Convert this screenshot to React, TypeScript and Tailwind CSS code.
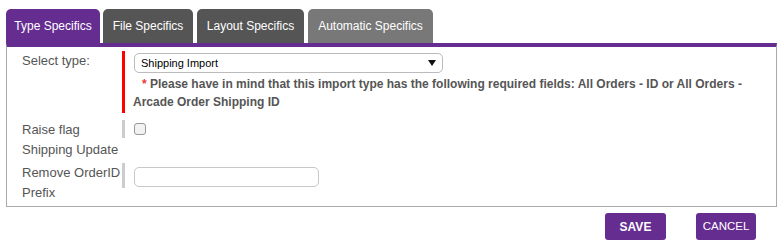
import React from "react";

export default function App() {
  const font = { fontFamily: '"Liberation Sans", Arial, sans-serif' };
  return (
    <div className="w-[780px] h-[250px] bg-white relative overflow-hidden" style={font}>
      <div className="pl-[6px] pt-[9px]">
        {/* Tabs */}
        <div className="flex gap-[3px] h-[34px]">
          <div className="w-[94px] h-[34px] bg-[#662d91] rounded-t-[5px] text-white text-[12px] flex items-center justify-center">
            Type Specifics
          </div>
          <div className="w-[90px] h-[34px] bg-[#555555] rounded-t-[5px] text-white text-[12px] flex items-center justify-center">
            File Specifics
          </div>
          <div className="w-[107px] ml-[1px] h-[34px] bg-[#555555] rounded-t-[5px] text-white text-[12px] flex items-center justify-center">
            Layout Specifics
          </div>
          <div className="w-[125px] ml-[1px] h-[34px] bg-[#787878] rounded-t-[5px] text-white text-[12px] flex items-center justify-center">
            Automatic Specifics
          </div>
        </div>
        {/* Content box */}
        <div className="w-[771px] border-t-[4px] border-t-[#662d91] border-x border-b border-x-[#aaaaaa] border-b-[#aaaaaa] pt-[4px] pb-[3px]">
          {/* Row 1 */}
          <div className="flex">
            <div className="w-[115px] pl-[15px] text-[13px] leading-[20px] text-[#555] shrink-0 whitespace-nowrap">Select type:</div>
            <div className="border-l-[3px] border-l-[#ff0000] pl-[9px] pt-[2px] h-[62px]">
              <div className="w-[309px] h-[20px] border border-[#bbbbbb] rounded-[5px] flex items-center justify-between pl-[6px] pr-[6px] text-[11px] text-black">
                <span>Shipping Import</span>
                <svg width="8" height="6" viewBox="0 0 8 6"><path d="M0 0 H8 L4 6 Z" fill="#111" /></svg>
              </div>
              <div className="w-[612px] -ml-[1px] text-[12px] font-bold leading-[18px] text-[#555] mt-[2px] indent-[9px]">
                <span className="text-[#e83a3a]">*</span> Please have in mind that this import type has the following required fields: All Orders - ID or All Orders - Arcade Order Shipping ID
              </div>
            </div>
          </div>
          {/* Row 2 */}
          <div className="flex mt-[7px]">
            <div className="w-[115px] pl-[15px] text-[13px] leading-[20px] text-[#555] shrink-0 whitespace-nowrap">
              Raise flag<br />Shipping Update
            </div>
            <div className="border-l-[3px] border-l-[#cccccc] pl-[9px] pt-[3px] h-[18px]">
              <div className="w-[12px] h-[12px] border border-[#999] rounded-[3px] bg-[#f2f2f2]" />
            </div>
          </div>
          {/* Row 3 */}
          <div className="flex mt-[3px]">
            <div className="w-[115px] pl-[15px] text-[13px] leading-[20px] text-[#555] shrink-0 whitespace-nowrap">
              Remove OrderID<br />Prefix
            </div>
            <div className="border-l-[3px] border-l-[#cccccc] pl-[9px] pt-[4px] h-[25px]">
              <div className="w-[185px] h-[20px] border border-[#c8c8c8] rounded-[5px] bg-white" />
            </div>
          </div>
        </div>
        {/* Buttons */}
        <div className="flex justify-end w-[750px] gap-[30px] mt-[6px]">
          <button className="w-[61px] h-[27px] bg-[#662d91] rounded-[3px] text-white text-[12px] font-bold">SAVE</button>
          <button className="w-[60px] h-[27px] bg-[#662d91] rounded-[3px] text-white text-[11.5px]">CANCEL</button>
        </div>
      </div>
    </div>
  );
}
